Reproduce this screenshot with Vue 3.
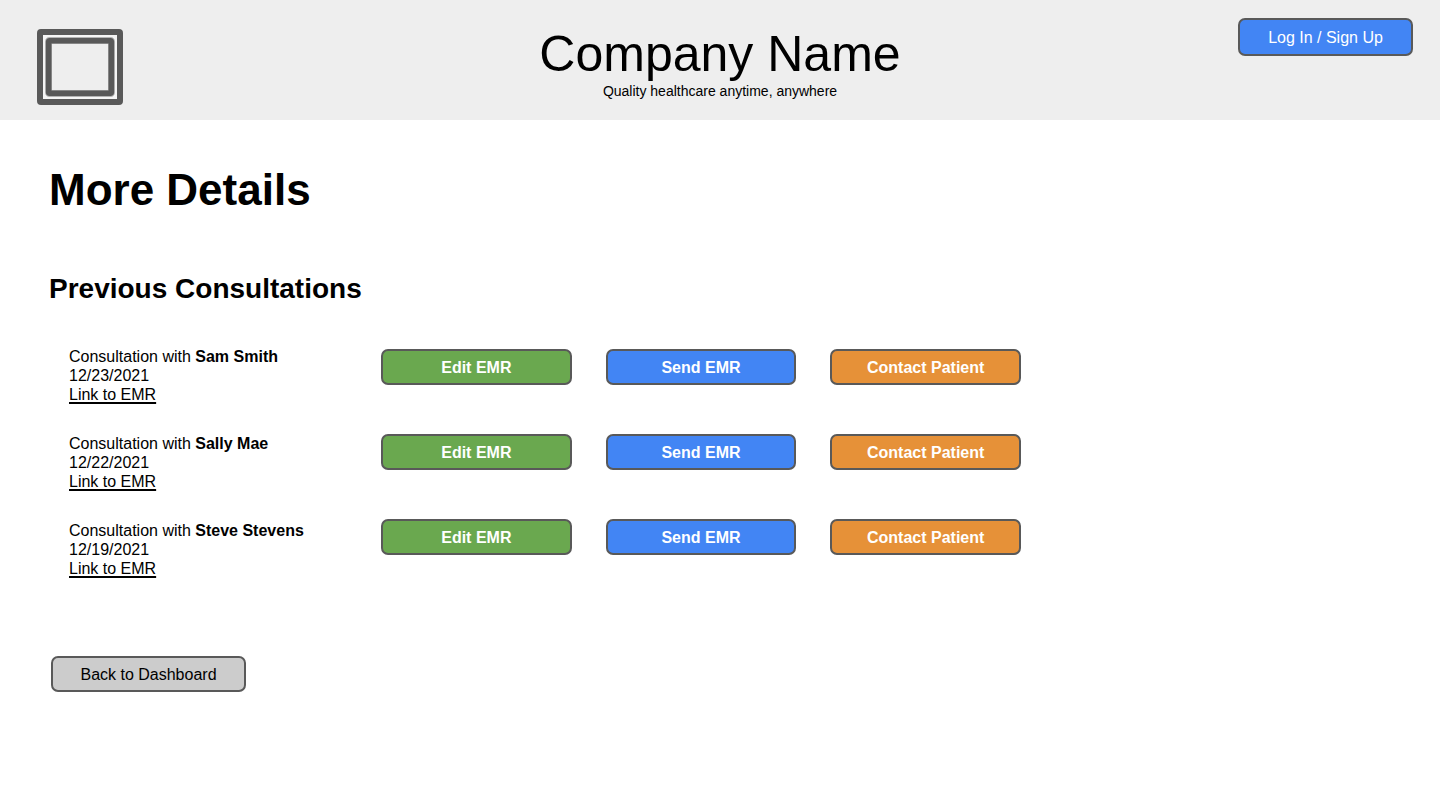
<script setup>
const consultations = [
  { id: 1, patient: 'Sam Smith', date: '12/23/2021' },
  { id: 2, patient: 'Sally Mae', date: '12/22/2021' },
  { id: 3, patient: 'Steve Stevens', date: '12/19/2021' },
]

const actions = [
  { label: 'Edit EMR', tone: 'green' },
  { label: 'Send EMR', tone: 'blue' },
  { label: 'Contact Patient', tone: 'orange' },
]
</script>

<template>
  <div class="page">
    <header class="header">
      <svg class="logo" viewBox="0 0 86 76" role="img" aria-label="Company logo">
        <rect x="3" y="3" width="80" height="70" rx="1" fill="#f5f5f5" stroke="#595959" stroke-width="6" />
        <rect x="11.5" y="11.5" width="63" height="53" rx="1" fill="#eeeeee" stroke="#b4b4b4" stroke-width="7" />
        <rect x="11.7" y="11.7" width="62.6" height="52.6" rx="1" fill="none" stroke="#595959" stroke-width="5.6" />
      </svg>
      <div class="brand">
        <p class="name">Company Name</p>
        <p class="tagline">Quality healthcare anytime, anywhere</p>
      </div>
      <button type="button" class="btn blue login">Log In / Sign Up</button>
    </header>

    <main class="main">
      <h1>More Details</h1>
      <h2>Previous Consultations</h2>

      <div class="consultations">
        <ul class="records">
          <li v-for="item in consultations" :key="item.id">
            <p>Consultation with <strong>{{ item.patient }}</strong></p>
            <p>{{ item.date }}</p>
            <a href="#">Link to EMR</a>
          </li>
        </ul>
        <div class="actions">
          <template v-for="item in consultations" :key="item.id">
            <button
              v-for="action in actions"
              :key="action.label"
              type="button"
              class="btn strong"
              :class="action.tone"
            >{{ action.label }}</button>
          </template>
        </div>
      </div>

      <button type="button" class="btn grey back">Back to Dashboard</button>
    </main>
  </div>
</template>

<style>
body {
  margin: 0;
  background: #ffffff;
}
</style>

<style scoped>
.page {
  font-family: "Liberation Sans", Arial, sans-serif;
  font-size: 16px;
  line-height: 19px;
  color: #000000;
}

p,
h1,
h2,
ul {
  margin: 0;
  padding: 0;
}

.header {
  display: grid;
  grid-template-columns: 1fr auto 1fr;
  align-items: start;
  min-height: 120px;
  box-sizing: border-box;
  padding: 18px 27px 0 37px;
  background: #eeeeee;
}

.logo {
  width: 86px;
  height: 76px;
  margin-top: 11px;
}

.brand {
  margin-top: 8px;
  margin-right: 10px;
  text-align: center;
}

.name {
  font-size: 50px;
  line-height: 56px;
}

.tagline {
  font-size: 14px;
  line-height: 18px;
}

.btn {
  box-sizing: border-box;
  height: 36px;
  padding: 0 8px;
  border: 2px solid #595959;
  border-radius: 7px;
  font: inherit;
  color: #ffffff;
  cursor: pointer;
}

.login {
  justify-self: end;
  width: 175px;
  height: 38px;
}

.strong {
  font-weight: 700;
}

.green {
  background: #6aa84f;
}

.blue {
  background: #4285f4;
}

.orange {
  background: #e69138;
}

.grey {
  background: #cccccc;
  color: #000000;
}

.main {
  padding: 44px 49px;
}

h1 {
  font-size: 44px;
  line-height: 52px;
}

h2 {
  margin-top: 57px;
  font-size: 28px;
  line-height: 32px;
}

.consultations {
  display: grid;
  grid-template-columns: 312px minmax(0, 640px);
  align-items: start;
  margin-top: 42px;
  padding-left: 20px;
}

.records {
  display: grid;
  gap: 30px;
  list-style: none;
}

.records a {
  color: inherit;
  text-decoration-thickness: 2px;
  text-underline-offset: 2px;
  text-decoration-skip-ink: none;
}

.actions {
  display: grid;
  grid-template-columns: repeat(3, 1fr);
  gap: 49px 34px;
  padding-top: 2px;
}

.back {
  width: 195px;
  margin: 78px 0 0 2px;
}
</style>
